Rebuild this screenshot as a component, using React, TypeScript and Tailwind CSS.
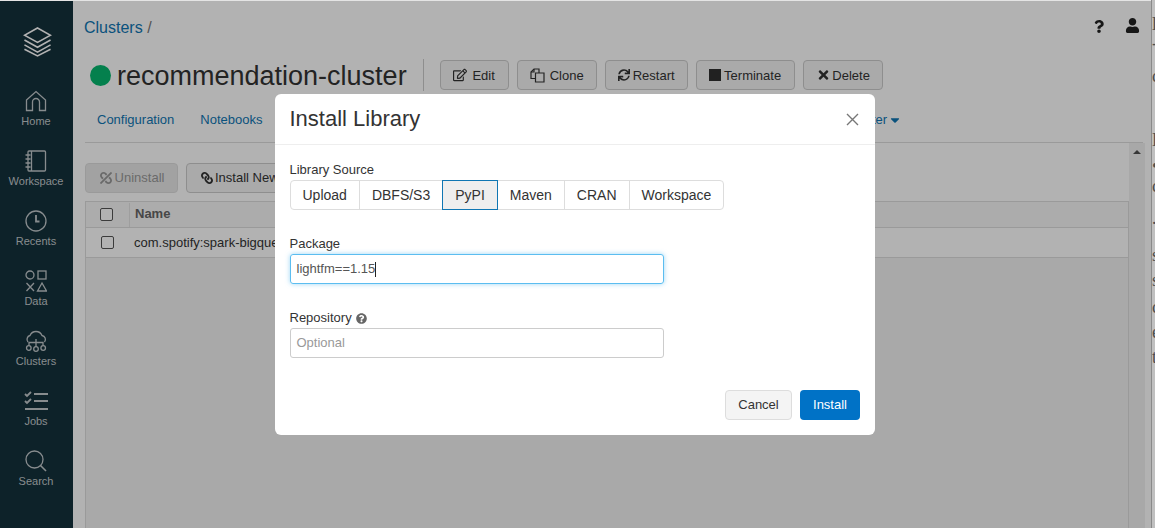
import React from "react";
import { FaRegEdit, FaSync, FaTimes, FaUnlink, FaLink, FaQuestion, FaUser, FaQuestionCircle, FaCaretDown } from "react-icons/fa";

const S = { fill: "none", stroke: "currentColor", strokeWidth: 1.3 } as const;

const Logo = () => (
  <svg width="29" height="31" viewBox="0 0 30 32" fill="none" stroke="#ffffff" strokeWidth="1.600">
    <path d="M15 2 L28.500 9.500 L15 17 L1.500 9.500 Z" />
    <path d="M1.500 14.500 L15 22 L28.500 14.500" />
    <path d="M1.500 19.500 L15 27 L28.500 19.500" />
    <path d="M1.500 24 L15 31 L28.500 24" />
  </svg>
);
const Home = () => (
  <svg width="22" height="22" viewBox="0 0 22 22" {...S}>
    <path d="M1.500 10 L11 1.500 L20.500 10 V20.500 H14.500 V12 A3.500 3.500 0 0 0 7.500 12 V20.500 H1.500 Z" />
  </svg>
);
const Workspace = () => (
  <svg width="22" height="22" viewBox="0 0 22 22" {...S}>
    <rect x="3" y="1" width="17.500" height="20" rx="1" />
    <path d="M6.500 1 V21 M0.500 5 H5.500 M0.500 9 H5.500 M0.500 13 H5.500 M0.500 17 H5.500" />
  </svg>
);
const Recents = () => (
  <svg width="22" height="22" viewBox="0 0 22 22" {...S}>
    <circle cx="11" cy="11" r="10" />
    <path d="M11 5 V11.500 H14.500" strokeWidth="1.800" />
  </svg>
);
const DataI = () => (
  <svg width="22" height="22" viewBox="0 0 22 22" {...S}>
    <circle cx="5" cy="5" r="4" />
    <rect x="13" y="1" width="8" height="8" />
    <path d="M1.500 13 L9 21 M9 13 L1.500 21" />
    <path d="M17 13 L21.500 21 H12.500 Z" />
  </svg>
);
const ClustersI = () => (
  <svg width="22" height="22" viewBox="0 0 22 22" {...S}>
    <path d="M3 12 A4 4 0 0 1 5 5.500 A6.500 6.500 0 0 1 17 5.500 A4 4 0 0 1 19.500 12" />
    <path d="M11 9 V17 M4 15.500 V12.500 H18 V15.500" />
    <circle cx="3.800" cy="18" r="2.300" />
    <circle cx="11" cy="19" r="2.300" />
    <circle cx="18.200" cy="18" r="2.300" />
  </svg>
);
const Jobs = () => (
  <svg width="24" height="21" viewBox="0 0 24 21" fill="none" stroke="currentColor" strokeWidth="2">
    <path d="M1 3 L3 5 L7 1 M1 10 L3 12 L7 8" strokeWidth="1.800" />
    <path d="M10 3 H24 M10 10 H24 M1 18 H24" />
  </svg>
);
const SearchI = () => (
  <svg width="22" height="22" viewBox="0 0 22 22" {...S}>
    <circle cx="9.500" cy="9.500" r="8.500" />
    <path d="M15.500 15.500 L21 21" strokeWidth="1.600" />
  </svg>
);
const Clone = () => (
  <svg width="15" height="15" viewBox="0 0 15 15" fill="none" stroke="currentColor" strokeWidth="1.200">
    <path d="M5 10.500 H1 V4 L4 1 H9 V5" />
    <path d="M4 1 V4 H1" />
    <path d="M5.500 5 H14 V14 H5.500 Z" />
  </svg>
);

const nav: [React.ReactNode, string][] = [
  [<Home />, "Home"],
  [<Workspace />, "Workspace"],
  [<Recents />, "Recents"],
  [<DataI />, "Data"],
  [<ClustersI />, "Clusters"],
  [<Jobs />, "Jobs"],
  [<SearchI />, "Search"],
];

const actions: [React.ReactNode, string, string][] = [
  [<FaRegEdit className="w-[14px] h-[14px]" />, "Edit", "w-[69px] gap-[5px]"],
  [<Clone />, "Clone", "w-[80px] gap-[5px]"],
  [<FaSync className="w-[12px] h-[12px]" />, "Restart", "w-[83px] gap-[3px]"],
  [<span className="w-[12px] h-[12px] bg-[#303030]" />, "Terminate", "w-[99px] gap-[3px]"],
  [<FaTimes className="w-[11px] h-[14px]" />, "Delete", "w-[80px] gap-[3px] pl-[3px]"],
];

const tabs = ["Configuration", "Notebooks", "Libraries", "Event Log", "Spark UI", "Driver Logs", "Metrics", "Apps"];
const sources = ["Upload", "DBFS/S3", "PyPI", "Maven", "CRAN", "Workspace"];
const sliver: [string, number][] = [
  ["l", 24], ["-", 43], ["c", 76], ["L", 140], ["•", 166], ["c", 186],
  [".", 218], ["s", 255], ["s", 280], ["c", 307], ["e", 332], ["t", 357],
];

export default function App() {
  return (
    <div className="relative w-[1155px] h-[528px] overflow-hidden flex bg-white text-[#333] font-['Liberation_Sans',Arial,sans-serif]">
      <div className="w-[73px] shrink-0 bg-[#14313b] flex flex-col items-center pr-[1px] text-[#c2c9cc]">
        <div className="h-[90px] pt-[26px] pl-[2px] flex justify-center"><Logo /></div>
        {nav.map(([icon, label]) => (
          <div key={label} className="h-[60px] flex flex-col items-center">
            <div className="h-[22px] flex items-center justify-center">{icon}</div>
            <span className="text-[11px] leading-[13px] mt-[3px]">{label}</span>
          </div>
        ))}
      </div>

      <div className="w-[1078px] shrink-0 flex flex-col min-w-0">
        <div className="h-[42px] flex items-start justify-between pl-[11px] pr-[11px] pt-[18px]">
          <div className="text-[16px] leading-[20px]">
            <span className="text-[#0f76b3]">Clusters</span> <span className="text-[#777]">/</span>
          </div>
          <div className="flex items-center gap-[21px] text-[#222]">
            <FaQuestion className="w-[10px] h-[13px] mt-[1px]" />
            <FaUser className="w-[15px] h-[15px]" />
          </div>
        </div>

        <div className="h-[50px] mt-[8px] flex items-center pl-[17px]">
          <span className="w-[21px] h-[21px] rounded-full bg-[#07b86f] mr-[6px]" />
          <span className="text-[27px] leading-[32px] pt-[2px] text-[#333]">recommendation-cluster</span>
          <span className="w-px h-[32px] bg-[#ccc] ml-[16px] mr-[16px]" />
          <div className="flex gap-[8px]">
            {actions.map(([icon, label, c]) => (
              <button key={label} className={`h-[30px] flex items-center justify-center rounded-[4px] border border-[#ccc] bg-[#f4f4f4] text-[13px] text-[#333] ${c}`}>
                {icon}
                <span className="pt-[2px]">{label}</span>
              </button>
            ))}
          </div>
        </div>

        <div className="h-[43px] mx-[12px] pl-[12px] pt-[11px] flex gap-[26px] items-start text-[13px] leading-[18px] text-[#0f76b3] whitespace-nowrap border-b border-[#ddd] w-[1058px]">
          {tabs.map((t) => <span key={t}>{t}</span>)}
          <span className="flex items-center gap-[3px] -ml-px">Spark Cluster UI - Master <FaCaretDown className="w-[10px] h-[14px]" /></span>
        </div>

        <div className="flex-1 flex pl-[12px] min-h-0">
          <div className="w-[1044px] pt-[20px] flex flex-col">
            <div className="flex gap-[8px]">
              <button className="h-[30px] w-[93px] flex items-center justify-center gap-[3px] pl-[1px] rounded-[4px] border border-[#ddd] bg-[#e9e9e9] text-[13px] text-[#999]">
                <FaUnlink className="w-[12px] h-[12px] -scale-x-100" />Uninstall
              </button>
              <button className="h-[30px] w-[150px] flex items-center justify-start pl-[14px] gap-[2px] rounded-[4px] border border-[#ccc] bg-[#f4f4f4] text-[13px] text-[#333] whitespace-nowrap">
                <FaLink className="w-[12px] h-[12px] -scale-x-100" />Install New
              </button>
            </div>
            <div className="mt-[8px] flex-1 border-x border-t border-[#ddd] bg-[#f3f3f3] flex flex-col">
              <div className="h-[26px] bg-[#f6f6f6] border-b border-[#ddd] flex items-center text-[13px] font-bold text-[#666]">
                <div className="w-[44px] h-[24px] flex items-center justify-center border-r border-[#e2e2e2] pr-[2px]">
                  <span className="w-[13px] h-[13px] rounded-[2px] border border-[#555] bg-white" />
                </div>
                <span className="pl-[5px] pb-[2px]">Name</span>
              </div>
              <div className="h-[30px] bg-white border-b border-[#ddd] flex items-center text-[13px] text-[#333]">
                <div className="w-[44px] flex justify-center pr-[2px]">
                  <span className="w-[13px] h-[13px] rounded-[2px] border border-[#555] bg-white" />
                </div>
                <span className="pl-[4px]">com.spotify:spark-bigquery</span>
              </div>
            </div>
          </div>
          <div className="w-[16px] bg-[#f1f1f1] pt-[7px] flex justify-center">
            <span className="w-0 h-0 border-x-[4px] border-x-transparent border-b-[4px] border-b-[#505050]" />
          </div>
        </div>
      </div>

      <div className="flex-1 z-10 border-l border-[#8a8a8a] bg-[#c0c0c0] overflow-hidden font-['Liberation_Serif',serif] text-[18px] leading-[20px] text-[#333]">
        <div className="opacity-80">
          {sliver.map(([c, y], i) => (
            <div key={i} className="h-[20px]" style={{ marginTop: y - (i ? sliver[i - 1][1] : 0) - (i ? 20 : 10) }}>{c}</div>
          ))}
        </div>
      </div>

      <div className="absolute inset-0 bg-black/30 border-t border-[#e4e4e4]" />

      <div className="absolute left-[275px] top-[94px] w-[600px] h-[341px] bg-white rounded-[6px] flex flex-col text-[#333]">
        <div className="h-[51px] shrink-0 border-b border-[#eee] flex items-center justify-between pl-[14.500px] pr-[16px]">
          <span className="text-[22px] leading-[28px]">Install Library</span>
          <svg width="13" height="13" viewBox="0 0 13 13" stroke="#777" strokeWidth="1.400"><path d="M1 1 L12 12 M12 1 L1 12" /></svg>
        </div>
        <div className="flex-1 flex flex-col pl-[14.500px] pr-[15px] pt-[17px]">
          <label className="text-[13px] leading-[16px]">Library Source</label>
          <div className="mt-[2px] flex h-[30px] w-fit text-[14px]">
            {sources.map((s, i) => (
              <span
                key={s}
                className={
                  s === "PyPI"
                    ? "flex items-center px-[12px] bg-[#eee] border border-[#0f76b3] -ml-px z-10"
                    : `flex items-center px-[12px] border border-[#ddd] ${i === 0 ? "rounded-l-[4px]" : "-ml-px"} ${i === sources.length - 1 ? "rounded-r-[4px]" : ""}`
                }
              >
                {s}
              </span>
            ))}
          </div>
          <label className="mt-[26px] text-[13px] leading-[16px]">Package</label>
          <div className="mt-[2px] w-[374px] h-[30px] rounded-[3px] border border-[#5bbdf0] shadow-[0_0_5px_rgba(91,189,240,0.6)] flex items-center px-[6px] text-[13px] text-[#555]">
            lightfm==1.15<span className="w-px h-[15px] bg-[#222]" />
          </div>
          <label className="mt-[26px] text-[13px] leading-[16px] flex items-center gap-[4px]">
            Repository <FaQuestionCircle className="w-[11px] h-[11px] text-[#666]" />
          </label>
          <div className="mt-[2px] w-[374px] h-[30px] rounded-[3px] border border-[#ccc] flex items-center px-[6px] text-[13px] text-[#999]">Optional</div>
          <div className="mt-[32px] flex justify-end gap-[8px]">
            <button className="w-[67px] h-[30px] rounded-[4px] border border-[#ddd] bg-[#f4f4f4] text-[13px] text-[#333]">Cancel</button>
            <button className="w-[60px] h-[30px] rounded-[4px] bg-[#0072c6] text-[13px] text-white">Install</button>
          </div>
        </div>
      </div>
    </div>
  );
}
